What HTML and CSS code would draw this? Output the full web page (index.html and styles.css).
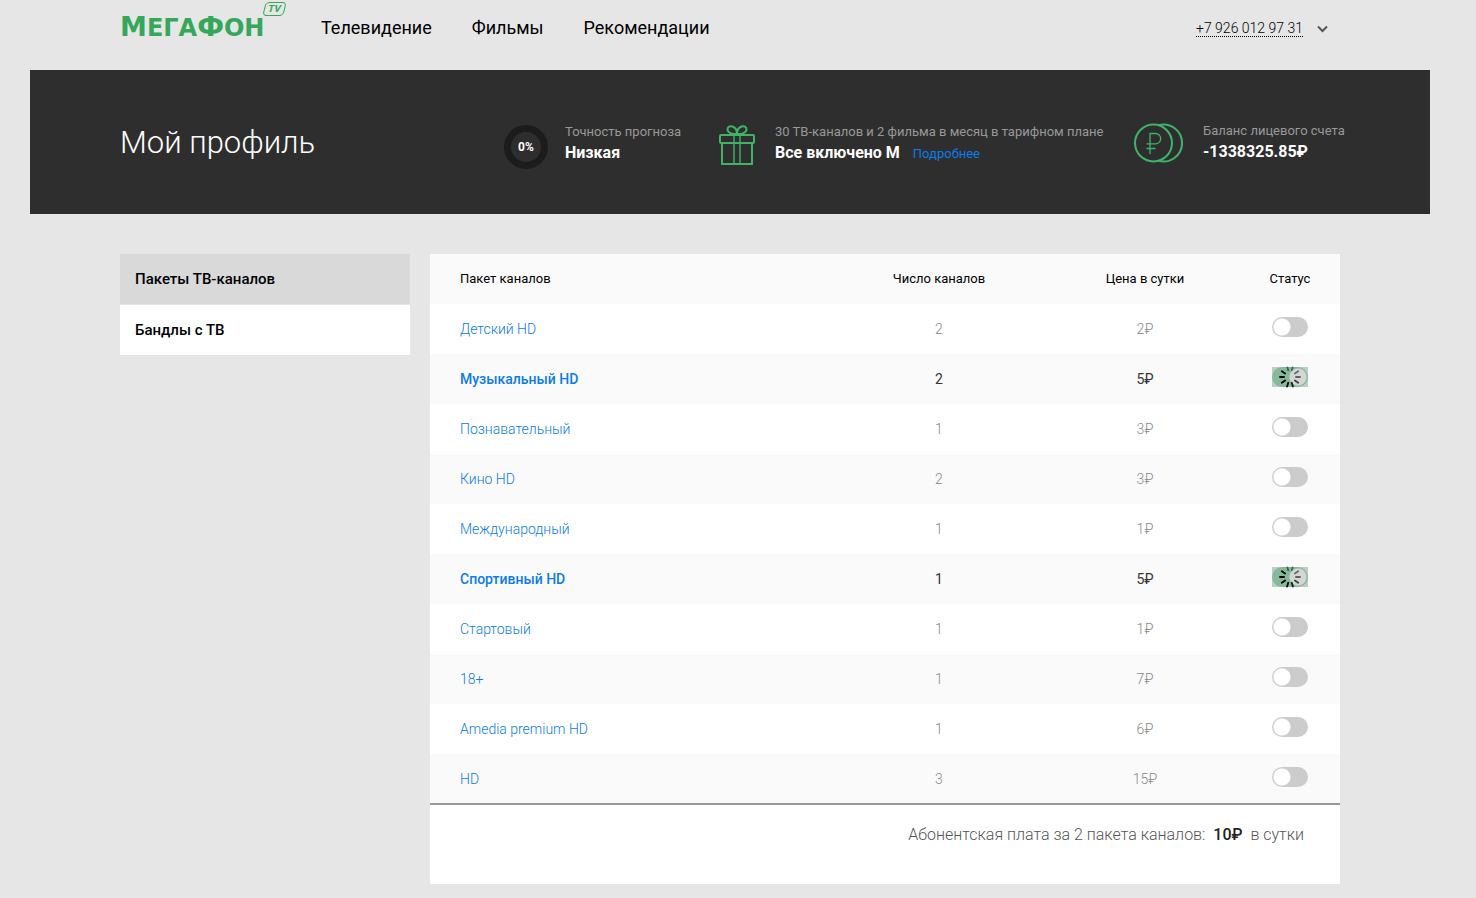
FILE: index.html
```html
<!DOCTYPE html>
<html lang="ru">
<head>
<meta charset="utf-8">
<meta name="viewport" content="width=device-width, initial-scale=1">
<title>Мой профиль</title>
<link rel="stylesheet" href="styles.css">
</head>
<body>
<svg class="sprite" aria-hidden="true">
  <symbol id="spinner" viewBox="0 0 22 22">
    <g stroke="#000" stroke-width="1.8" stroke-linecap="round">
      <path d="M11 4V1" transform="rotate(15 11 11)" opacity=".45"/>
      <path d="M11 5V1" transform="rotate(55 11 11)" opacity=".5"/>
      <path d="M11 5V1" transform="rotate(90 11 11)" opacity=".55"/>
      <path d="M11 5V1" transform="rotate(125 11 11)" opacity=".7"/>
      <path d="M11 5V1" transform="rotate(163 11 11)" opacity=".85"/>
      <path d="M11 5V1" transform="rotate(197 11 11)"/>
      <path d="M11 5V1" transform="rotate(235 11 11)"/>
      <path d="M11 5V1" transform="rotate(270 11 11)"/>
      <path d="M11 5V1" transform="rotate(305 11 11)"/>
      <path d="M11 4V1" transform="rotate(345 11 11)" opacity=".5"/>
    </g>
  </symbol>
</svg>
<header class="header wrap">
  <a class="logo" href="#" aria-label="МегаФон TV"><span class="logo-name">М<small>ЕГА</small>Ф<small>ОН</small></span><span class="logo-tv">TV</span></a>
  <nav class="nav">
    <a href="#">Телевидение</a>
    <a href="#">Фильмы</a>
    <a href="#">Рекомендации</a>
  </nav>
  <button class="account" type="button"><span class="phone">+7 926 012 97 31</span>
    <svg width="11" height="8" viewBox="0 0 11 8" fill="none" stroke="#555" stroke-width="2"><path d="M1 1.5 5.5 6 10 1.5"/></svg>
  </button>
</header>

<section class="banner">
  <div class="wrap banner-grid">
    <h1>Мой профиль</h1>
    <div class="stat">
      <div class="ring">0%</div>
      <div><p class="caption">Точность прогноза</p><p class="value">Низкая</p></div>
    </div>
    <div class="stat">
      <svg width="36" height="42" viewBox="0 0 36 42" fill="none" stroke="#3fb469" stroke-width="2">
        <rect x="1" y="11" width="34" height="8" rx="1"/>
        <path d="M3 19v21h30V19"/>
        <path d="M15 11v29M21 11v29" stroke-width="1.4"/>
        <path d="M18 10C13 10.500 8.500 8.500 8.500 5.500 8.500 3 11 1.500 13.500 2.500 16.500 3.500 18 7 18 10zM18 10C23 10.500 27.500 8.500 27.500 5.500 27.500 3 25 1.500 22.500 2.500 19.500 3.500 18 7 18 10z"/>
      </svg>
      <div><p class="caption">30 ТВ-каналов и 2 фильма в месяц в тарифном плане</p><p class="value">Все включено М<a href="#">Подробнее</a></p></div>
    </div>
    <div class="stat balance">
      <svg width="49" height="40" viewBox="0 0 49 40" fill="none" stroke="#3fb469" stroke-width="2">
        <circle cx="19.500" cy="20" r="18.500"/>
        <path d="M24.500 2.200A18.500 18.500 0 1 1 24.500 37.800"/>
        <path d="M16 31V10.500h5.500a5.200 5.200 0 0 1 0 10.400H12.500M12.500 25.500H21.500" stroke-width="1.300"/>
      </svg>
      <div><p class="caption">Баланс лицевого счета</p><p class="value">-1338325.85₽</p></div>
    </div>
  </div>
</section>

<main class="wrap content">
  <nav class="side">
    <a class="current" href="#">Пакеты ТВ-каналов</a>
    <a href="#">Бандлы с ТВ</a>
  </nav>
  <section class="panel">
    <table>
      <colgroup><col><col class="c-count"><col class="c-price"><col class="c-status"></colgroup>
      <thead><tr><th>Пакет каналов</th><th>Число каналов</th><th>Цена в сутки</th><th>Статус</th></tr></thead>
      <tbody>
        <tr><td><a href="#">Детский HD</a></td><td>2</td><td>2₽</td><td><input class="toggle" type="checkbox" aria-label="Детский HD"></td></tr>
        <tr class="on"><td><a href="#">Музыкальный HD</a></td><td>2</td><td>5₽</td><td><span class="busy"><input class="toggle" type="checkbox" checked aria-label="Музыкальный HD"><svg><use href="#spinner"/></svg></span></td></tr>
        <tr><td><a href="#">Познавательный</a></td><td>1</td><td>3₽</td><td><input class="toggle" type="checkbox" aria-label="Познавательный"></td></tr>
        <tr><td><a href="#">Кино HD</a></td><td>2</td><td>3₽</td><td><input class="toggle" type="checkbox" aria-label="Кино HD"></td></tr>
        <tr><td><a href="#">Международный</a></td><td>1</td><td>1₽</td><td><input class="toggle" type="checkbox" aria-label="Международный"></td></tr>
        <tr class="on"><td><a href="#">Спортивный HD</a></td><td>1</td><td>5₽</td><td><span class="busy"><input class="toggle" type="checkbox" checked aria-label="Спортивный HD"><svg><use href="#spinner"/></svg></span></td></tr>
        <tr><td><a href="#">Стартовый</a></td><td>1</td><td>1₽</td><td><input class="toggle" type="checkbox" aria-label="Стартовый"></td></tr>
        <tr><td><a href="#">18+</a></td><td>1</td><td>7₽</td><td><input class="toggle" type="checkbox" aria-label="18+"></td></tr>
        <tr><td><a href="#">Amedia premium HD</a></td><td>1</td><td>6₽</td><td><input class="toggle" type="checkbox" aria-label="Amedia premium HD"></td></tr>
        <tr><td><a href="#">HD</a></td><td>3</td><td>15₽</td><td><input class="toggle" type="checkbox" aria-label="HD"></td></tr>
      </tbody>
    </table>
    <p class="total">Абонентская плата за 2 пакета каналов: <strong>10₽</strong> в сутки</p>
  </section>
</main>
</body>
</html>
```
FILE: styles.css
```css
* { box-sizing: border-box; }
body {
  margin: 0;
  padding: 0 46px 14px 30px;
  background: #e6e6e6;
  color: #000;
  font: 14px/20px Roboto, "Noto Sans", sans-serif;
}
a { color: #0c7ce8; text-decoration: none; }
p, h1 { margin: 0; }
.sprite { position: absolute; width: 0; height: 0; }
.wrap { max-width: 1220px; margin: 0 auto; }

.header { display: flex; align-items: flex-start; height: 70px; }
.logo { display: flex; color: #35a75b; width: 201px; }
.logo-name { font: bold 27px/30px "DejaVu Sans", sans-serif; padding-top: 12px; }
.logo-name small { font-size: 24px; }
.logo-tv {
  align-self: flex-start;
  margin-top: 2px;
  width: 21px;
  border: 1px solid #35a75b;
  border-radius: 4px;
  font: bold 10px/12px Roboto, sans-serif;
  text-align: center;
  transform: skewX(-14deg);
}
.nav { display: flex; gap: 40px; flex: 1; padding-top: 16px; }
.nav a { color: #000; font-size: 18px; line-height: 24px; }
.account {
  display: flex;
  align-items: center;
  gap: 14px;
  margin: 20px 12px 0 0;
  padding: 0;
  border: 0;
  background: none;
  font: 300 14px/16px Roboto, sans-serif;
  color: #000;
}
.phone { border-bottom: 1px dotted #000; }

.banner { max-width: 1400px; margin: 0 auto; padding: 50px 0 45px; background: #2e2e2e; color: #fff; }
.banner-grid { display: grid; grid-template-columns: 1fr 172px 372px 206px; column-gap: 43px; }
h1 { font-size: 31px; line-height: 46px; font-weight: 300; white-space: nowrap; }
.stat { display: flex; align-items: flex-start; gap: 20px; white-space: nowrap; padding-top: 2px; }
.stat > svg { flex: none; margin-top: 2px; }
.balance { padding-top: 1px; }
.ring {
  flex: none;
  width: 44px;
  height: 44px;
  margin: 3px -3px 0 0;
  border: 7px solid #1c1c1c;
  border-radius: 50%;
  font-size: 12px;
  line-height: 30px;
  font-weight: bold;
  text-align: center;
}
.caption { color: #999; font-size: 13px; line-height: 20px; }
.value { font-size: 16px; line-height: 22px; font-weight: bold; }
.value a { margin-left: 13px; font-size: 13px; font-weight: 400; }

.content { display: flex; align-items: flex-start; gap: 20px; margin-top: 40px; }
.side { display: grid; row-gap: 1px; flex: 0 0 290px; }
.side a { padding: 15px; background: #fff; color: #000; font-size: 15px; font-weight: 500; }
.side .current { background: #d9d9d9; }

.panel { flex: 1; min-width: 0; background: #fff; }
table { width: 100%; table-layout: fixed; border-collapse: collapse; border-bottom: 2px solid #999; }
.c-count { width: 222px; }
.c-price { width: 190px; }
.c-status { width: 100px; }
tr:nth-child(even), thead tr { background: #fafafa; }
th, td { height: 50px; padding: 0; text-align: center; color: #888; font-weight: 300; }
th { color: #000; font-size: 13px; font-weight: 400; }
th:first-child, td:first-child { padding-left: 30px; text-align: left; }
.on td { color: #333; font-weight: 400; }
.on a { font-weight: 500; }
td:last-child { padding-bottom: 4px; }
.toggle {
  appearance: none;
  display: block;
  width: 36px;
  height: 20px;
  margin: 0 auto;
  border-radius: 10px;
  background: radial-gradient(circle at 10px 10px, #fff 8px, #ccc 9px);
}
.busy { display: block; position: relative; width: 36px; margin: 0 auto; background: #bccfc4; }
.busy .toggle { background: radial-gradient(circle at 26px 10px, #d3d6d4 8px, #86b99b 9px); }
.busy svg { position: absolute; left: 7px; top: -1px; width: 22px; height: 22px; }
.total { padding: 20px 36px 39px; color: #555; font-size: 16px; font-weight: 300; text-align: right; }
.total strong { margin: 0 4px; color: #222; font-weight: 500; }
```
